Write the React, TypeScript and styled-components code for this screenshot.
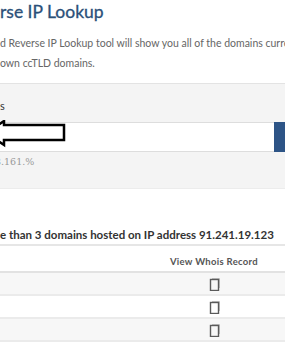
import styled, { createGlobalStyle } from "styled-components";

const GlobalStyle = createGlobalStyle`
  html, body {
    margin: 0;
    padding: 0;
    background: #ffffff;
    overflow: hidden;
  }
  body {
    font-family: Lato, "Open Sans", sans-serif;
    color: #333;
  }
`;

const Page = styled.div`
  width: 285px;
  height: 350px;
  overflow: hidden;
`;

const Intro = styled.div`
  height: 83px;
`;

const Title = styled.h1`
  margin: 0;
  font-size: 17.5px;
  line-height: 24px;
  font-weight: 400;
  -webkit-text-stroke: 0.3px #2b5079;
  color: #2b5079;
  white-space: nowrap;
`;

const Lead = styled.p`
  margin: 9px 0 0;
  font-size: 10.5px;
  line-height: 20px;
  color: #666;
  white-space: nowrap;
`;

const SearchPanel = styled.section`
  background: #f4f4f4;
  border-top: 1px solid #e3e3e3;
  border-bottom: 1px solid #ececec;
  height: 106px;
  padding-top: 15px;
  box-sizing: border-box;
`;

const Label = styled.div`
  font-size: 11px;
  line-height: 14px;
  color: #333;
`;

const InputRow = styled.div`
  position: relative;
  display: flex;
  height: 30px;
  margin-top: 9px;
`;

const Field = styled.div`
  flex: 1;
  background: #fff;
  border-top: 1px solid #ddd;
  border-bottom: 1px solid #ddd;
`;

const Submit = styled.div`
  width: 11px;
  background: #2d5486;
`;

const Arrow = styled.svg`
  position: absolute;
  left: 0;
  top: -2px;
`;

const Hint = styled.div`
  margin: 3px 0 0 -5px;
  font-family: "DejaVu Serif", "Liberation Serif", serif;
  font-size: 9.5px;
  line-height: 14px;
  color: #999;
`;

const Summary = styled.h3`
  margin: 0;
  padding-top: 38px;
  height: 57px;
  box-sizing: border-box;
  font-size: 11.5px;
  line-height: 16px;
  font-weight: 700;
  color: #333;
  white-space: nowrap;
  border-bottom: 2px solid #e6e6e6;
`;

const Table = styled.div`
  display: grid;
  grid-template-columns: 1fr 120px;
`;

const HeadCell = styled.div<{ $align?: string }>`
  height: 27px;
  box-sizing: border-box;
  padding: 8px 27px 0 0;
  line-height: 16px;
  font-size: 9.5px;
  font-weight: 700;
  letter-spacing: 0.3px;
  color: #555;
  text-align: ${(p) => p.$align || "left"};
  border-bottom: 2px solid #e2e2e2;
`;

const Cell = styled.div<{ $odd: boolean }>`
  height: 21px;
  display: flex;
  align-items: center;
  justify-content: flex-start;
  padding-left: 44px;
  background: ${(p) => (p.$odd ? "#f7f7f7" : "#fff")};
  border-bottom: 2px solid #ebebeb;
`;

const Blank = styled(Cell)`
  padding-left: 0;
`;

const RecordIcon = () => (
  <svg width="12" height="14" viewBox="0 0 12 14">
    <path d="M3 1.5 H10.5 V11" fill="none" stroke="#c4c4c4" strokeWidth="1" />
    <rect x="1.5" y="2.5" width="8" height="11" fill="none" stroke="#5a5a5a" strokeWidth="1.4" />
  </svg>
);

const rows = [0, 1, 2];

export default function App() {
  return (
    <Page>
      <GlobalStyle />
      <Intro>
        <Title>rse IP Lookup</Title>
        <Lead>
          d Reverse IP Lookup tool will show you all of the domains currently
          <br />
          own ccTLD domains.
        </Lead>
      </Intro>
      <SearchPanel>
        <Label>s</Label>
        <InputRow>
          <Field />
          <Submit />
          <Arrow width="70" height="30" viewBox="0 0 70 30">
            <path
              d="M-14 13 L4 1 V5 H64 V20 H4 V25 Z"
              fill="#fff"
              stroke="#000"
              strokeWidth="2.5"
              strokeLinejoin="miter"
            />
          </Arrow>
        </InputRow>
        <Hint>3.161.%</Hint>
      </SearchPanel>
      <Summary>e than 3 domains hosted on IP address 91.241.19.123</Summary>
      <Table>
        <HeadCell />
        <HeadCell $align="right">View Whois Record</HeadCell>
        {rows.map((i) => (
          <>
            <Blank key={`a${i}`} $odd={i % 2 === 0} />
            <Cell key={`b${i}`} $odd={i % 2 === 0}>
              <RecordIcon />
            </Cell>
          </>
        ))}
      </Table>
    </Page>
  );
}
